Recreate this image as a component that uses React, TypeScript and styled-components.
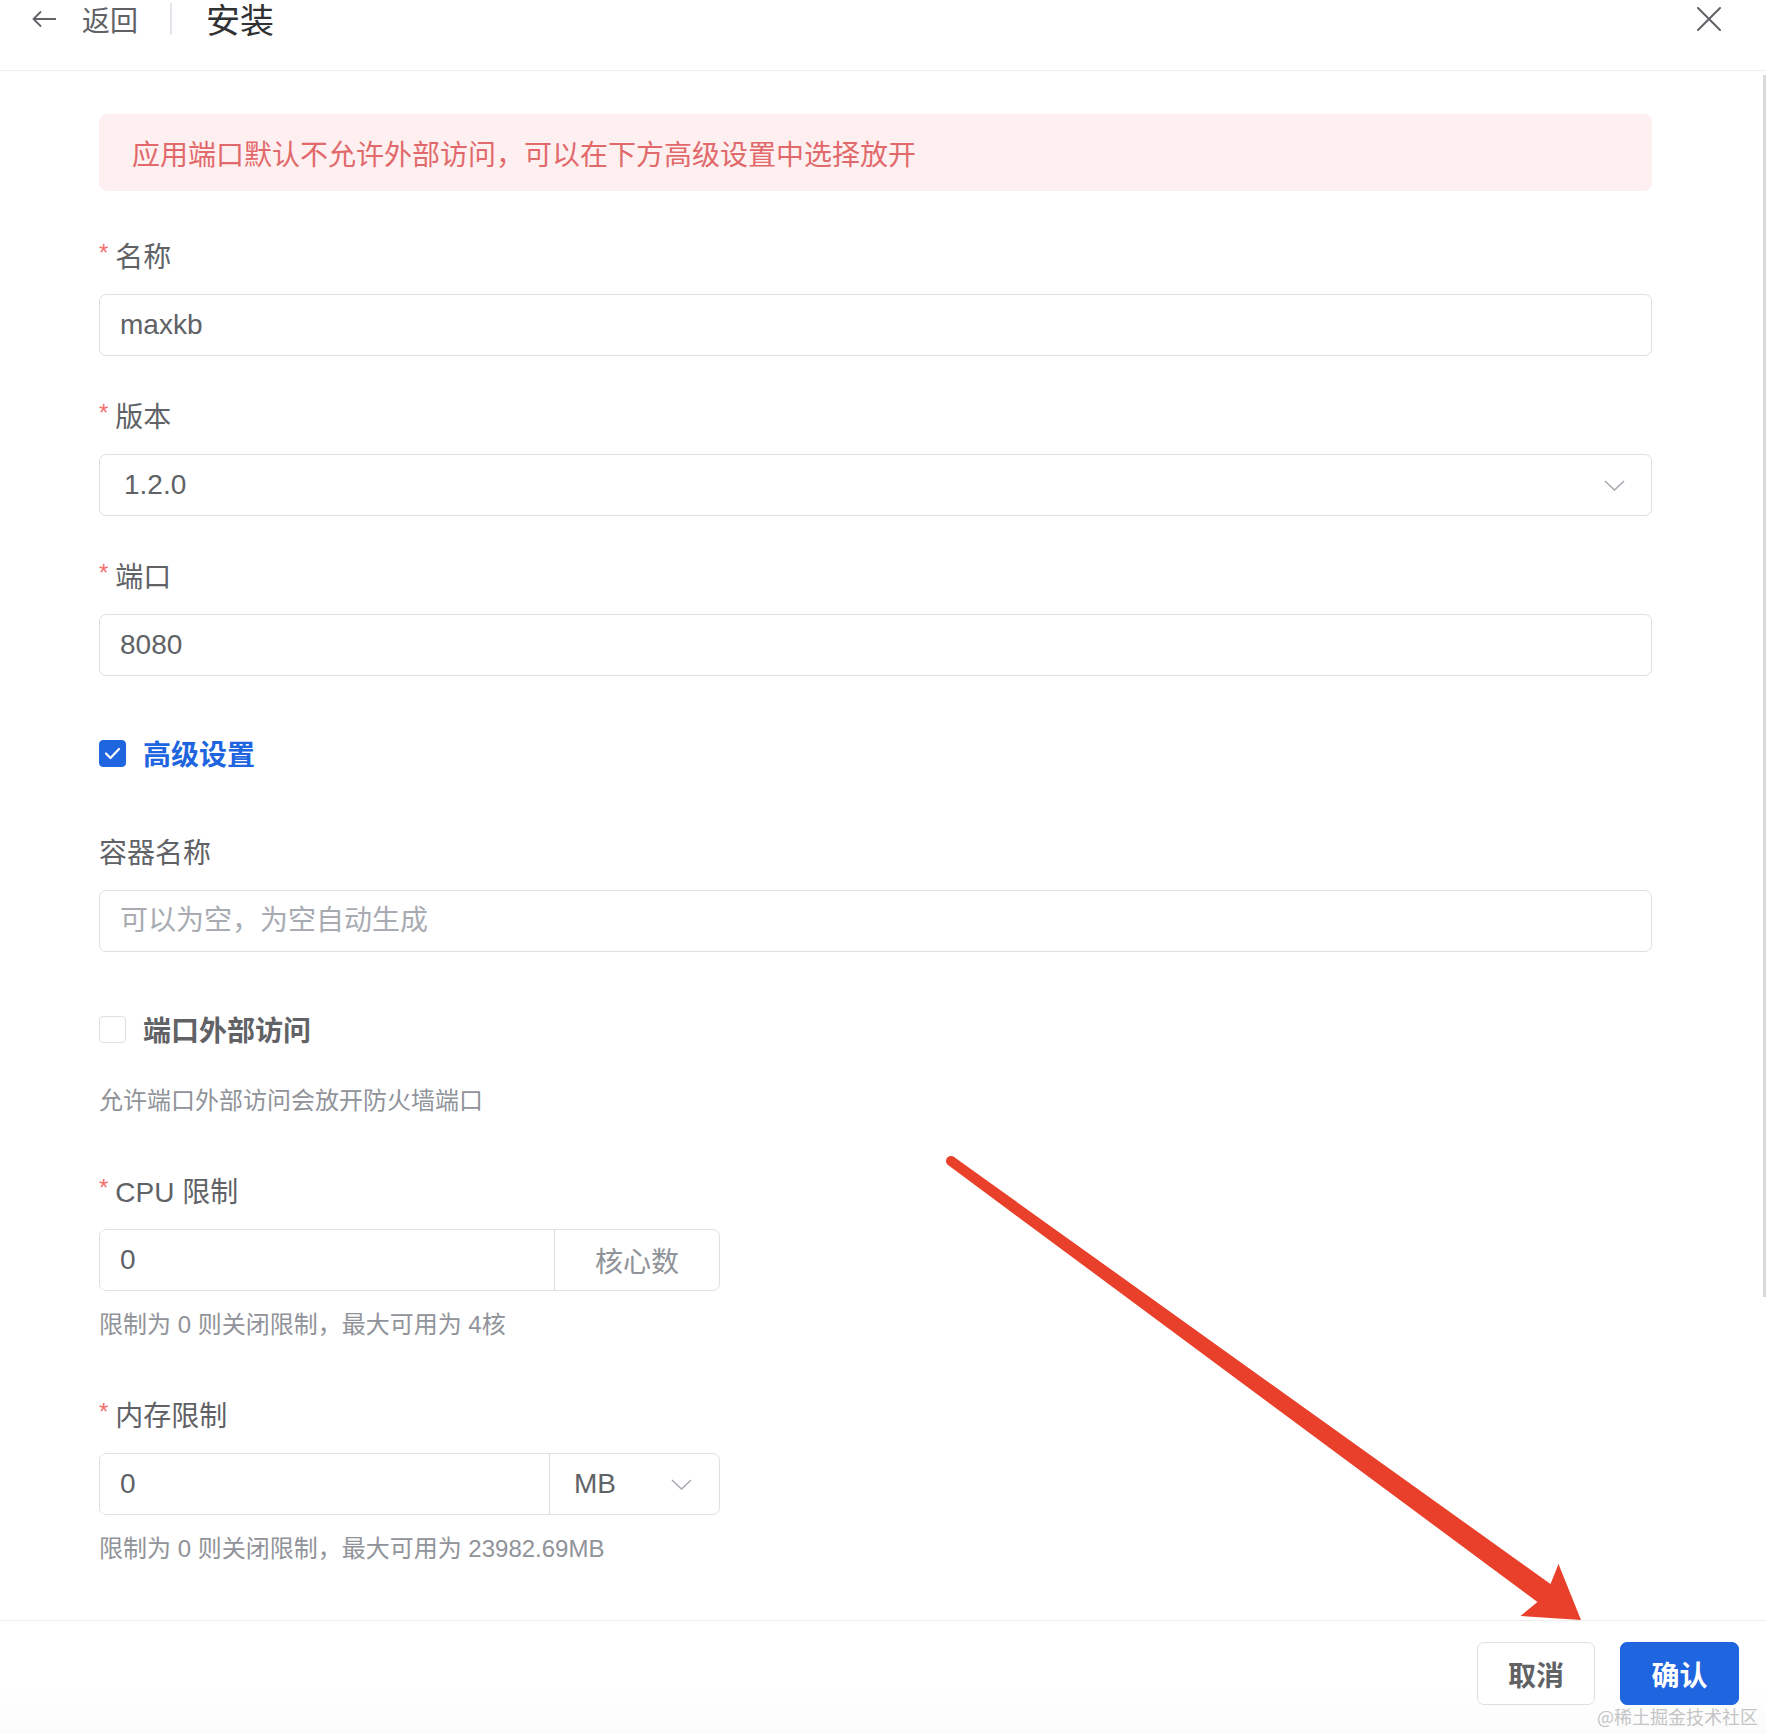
import React from 'react';
import styled, { createGlobalStyle } from 'styled-components';

const GlobalStyle = createGlobalStyle`
  html, body {
    margin: 0;
    padding: 0;
    background: #fff;
  }
  body {
    font-family: "Liberation Sans", "Noto Sans CJK SC", sans-serif;
  }
  * {
    box-sizing: border-box;
  }
`;

const blue = '#2065e0';

const Page = styled.div`
  position: relative;
  width: 100%;
  height: 1734px;
  display: flex;
  flex-direction: column;
  overflow: hidden;
  background: #fff;
`;

const Header = styled.header`
  height: 71px;
  flex-shrink: 0;
  display: flex;
  align-items: flex-start;
  justify-content: space-between;
  padding: 0 45px 0 32px;
  border-bottom: 1px solid #efefef;
`;

const HeaderLeft = styled.div`
  height: 37px;
  display: flex;
  align-items: center;
`;

const Back = styled.span`
  display: flex;
  align-items: center;
  gap: 26px;
  color: #606266;
  font-size: 28px;
`;

const HeaderDivider = styled.span`
  width: 2px;
  height: 32px;
  margin: 0 34px 0 32px;
  background: #e4e6eb;
`;

const Title = styled.span`
  color: #303133;
  font-size: 34px;
  font-weight: 400;
`;

const Close = styled.span`
  height: 38px;
  display: flex;
  align-items: center;
`;

const Body = styled.main`
  position: relative;
  flex: 1;
  display: flex;
  flex-direction: column;
  padding: 43px 114px 0 99px;
`;

const ScrollThumb = styled.div`
  position: absolute;
  top: 4px;
  right: 0;
  width: 3px;
  height: 1222px;
  background: #dadada;
`;

const Alert = styled.div`
  height: 77px;
  display: flex;
  align-items: center;
  padding-left: 33px;
  margin-bottom: 44px;
  border-radius: 8px;
  background: #fef0f0;
  color: #e2696b;
  font-size: 28px;
`;

const FormItem = styled.div<{ $mb: number }>`
  display: flex;
  flex-direction: column;
  margin-bottom: ${(p) => p.$mb}px;
`;

const Label = styled.label`
  display: flex;
  align-items: center;
  height: 40px;
  margin-bottom: 19px;
  color: #606266;
  font-size: 28px;
`;

const Star = styled.span`
  color: #f56c6c;
  font-size: 24px;
  margin-right: 7px;
  align-self: flex-start;
  line-height: 36px;
`;

const Input = styled.input`
  height: 62px;
  width: 100%;
  padding: 0 20px;
  border: 1px solid #dcdfe6;
  border-radius: 7px;
  outline: none;
  font: inherit;
  font-size: 28px;
  color: #606266;
  background: #fff;

  &::placeholder {
    color: #a8abb2;
  }
`;

const Select = styled.div`
  height: 62px;
  display: flex;
  align-items: center;
  justify-content: space-between;
  padding: 0 26px 0 24px;
  border: 1px solid #dcdfe6;
  border-radius: 7px;
  color: #606266;
  font-size: 28px;
`;

const CheckRow = styled.div<{ $mb: number }>`
  height: 40px;
  display: flex;
  align-items: center;
  gap: 17px;
  margin-bottom: ${(p) => p.$mb}px;
`;

const Box = styled.span<{ $checked?: boolean }>`
  width: 27px;
  height: 27px;
  display: flex;
  align-items: center;
  justify-content: center;
  border-radius: 4px;
  border: 1.5px solid ${(p) => (p.$checked ? blue : '#dcdfe6')};
  background: ${(p) => (p.$checked ? blue : '#fff')};
`;

const CheckText = styled.span<{ $checked?: boolean }>`
  font-size: 28px;
  font-weight: 700;
  color: ${(p) => (p.$checked ? blue : '#606266')};
`;

const Help = styled.div<{ $mt?: number; $mb?: number }>`
  line-height: 34px;
  font-size: 24px;
  color: #909399;
  margin-top: ${(p) => p.$mt || 0}px;
  margin-bottom: ${(p) => p.$mb || 0}px;
`;

const Group = styled.div`
  width: 621px;
  height: 62px;
  display: flex;
  border: 1px solid #dcdfe6;
  border-radius: 7px;
  overflow: hidden;
`;

const GroupField = styled.input`
  flex: 1;
  min-width: 0;
  border: none;
  outline: none;
  padding: 0 20px;
  font: inherit;
  font-size: 28px;
  color: #606266;
  background: #fff;
`;

const Append = styled.div<{ $w: number }>`
  width: ${(p) => p.$w}px;
  display: flex;
  align-items: center;
  justify-content: center;
  border-left: 1px solid #dcdfe6;
  color: #909399;
  font-size: 28px;
`;

const UnitSelect = styled.div<{ $w: number }>`
  width: ${(p) => p.$w}px;
  display: flex;
  align-items: center;
  justify-content: space-between;
  padding: 0 27px 0 24px;
  border-left: 1px solid #dcdfe6;
  color: #606266;
  font-size: 28px;
`;

const Footer = styled.footer`
  height: 114px;
  flex-shrink: 0;
  display: flex;
  justify-content: flex-end;
  align-items: flex-start;
  gap: 25px;
  padding: 21px 27px 0 0;
  border-top: 1px solid #eeeeee;
  background: linear-gradient(to bottom, #fff 60%, #fbfbfb 100%);
`;

const Button = styled.button<{ $primary?: boolean; $w: number }>`
  width: ${(p) => p.$w}px;
  height: 63px;
  border-radius: 7px;
  border: 1.5px solid ${(p) => (p.$primary ? blue : '#dcdfe6')};
  background: ${(p) => (p.$primary ? blue : '#fff')};
  color: ${(p) => (p.$primary ? '#fff' : '#606266')};
  font-family: "Liberation Sans", "Noto Sans CJK SC", sans-serif;
  font-size: 28px;
  font-weight: 700;
  padding: 0;
`;

const Watermark = styled.div`
  position: absolute;
  right: 8px;
  bottom: 7px;
  font-size: 18px;
  line-height: 22px;
  color: #c4c4c4;
  font-family: "Noto Sans CJK SC", sans-serif;
`;

const Annotation = styled.svg`
  position: absolute;
  top: 0;
  left: 0;
  pointer-events: none;
`;

const Chevron = () => (
  <svg width="21" height="11" viewBox="0 0 21 11">
    <path d="M1 1 L10.5 10 L20 1" fill="none" stroke="#a8abb2" strokeWidth="1.6" />
  </svg>
);

const ArrowBack = () => (
  <svg width="24" height="16" viewBox="0 0 24 16">
    <path
      d="M1.5 8 H23.5 M8.5 1 L1.5 8 L8.5 15"
      fill="none"
      stroke="#606266"
      strokeWidth="1.8"
      strokeLinecap="round"
      strokeLinejoin="round"
    />
  </svg>
);

const CloseIcon = () => (
  <svg width="24" height="24" viewBox="0 0 24 24">
    <path d="M1 1 L23 23 M23 1 L1 23" stroke="#606266" strokeWidth="2" strokeLinecap="round" />
  </svg>
);

const Check = () => (
  <svg width="17" height="13" viewBox="0 0 17 13">
    <path d="M2 6.5 L6.5 11 L15 2" fill="none" stroke="#fff" strokeWidth="2.2" strokeLinecap="round" strokeLinejoin="round" />
  </svg>
);

export default function App() {
  return (
    <Page>
      <GlobalStyle />
      <Header>
        <HeaderLeft>
          <Back>
            <ArrowBack />
            返回
          </Back>
          <HeaderDivider />
          <Title>安装</Title>
        </HeaderLeft>
        <Close>
          <CloseIcon />
        </Close>
      </Header>

      <Body>
        <ScrollThumb />
        <Alert>应用端口默认不允许外部访问，可以在下方高级设置中选择放开</Alert>

        <FormItem $mb={39}>
          <Label>
            <Star>*</Star>名称
          </Label>
          <Input defaultValue="maxkb" />
        </FormItem>

        <FormItem $mb={39}>
          <Label>
            <Star>*</Star>版本
          </Label>
          <Select>
            <span>1.2.0</span>
            <Chevron />
          </Select>
        </FormItem>

        <FormItem $mb={57}>
          <Label>
            <Star>*</Star>端口
          </Label>
          <Input defaultValue="8080" />
        </FormItem>

        <CheckRow $mb={58}>
          <Box $checked>
            <Check />
          </Box>
          <CheckText $checked>高级设置</CheckText>
        </CheckRow>

        <FormItem $mb={57}>
          <Label>容器名称</Label>
          <Input placeholder="可以为空，为空自动生成" />
        </FormItem>

        <CheckRow $mb={35}>
          <Box />
          <CheckText>端口外部访问</CheckText>
        </CheckRow>
        <Help $mb={52}>允许端口外部访问会放开防火墙端口</Help>

        <FormItem $mb={52}>
          <Label>
            <Star>*</Star>CPU 限制
          </Label>
          <Group>
            <GroupField defaultValue="0" />
            <Append $w={165}>核心数</Append>
          </Group>
          <Help $mt={17}>限制为 0 则关闭限制，最大可用为 4核</Help>
        </FormItem>

        <FormItem $mb={0}>
          <Label>
            <Star>*</Star>内存限制
          </Label>
          <Group>
            <GroupField defaultValue="0" />
            <UnitSelect $w={170}>
              <span>MB</span>
              <Chevron />
            </UnitSelect>
          </Group>
          <Help $mt={17}>限制为 0 则关闭限制，最大可用为 23982.69MB</Help>
        </FormItem>
      </Body>

      <Footer>
        <Button $w={118}>取消</Button>
        <Button $w={119} $primary>
          确认
        </Button>
      </Footer>

      <Annotation width="1766" height="1734" viewBox="0 0 1766 1734">
        <circle cx="951" cy="1161" r="5" fill="#e8402a" />
        <polygon
          points="954,1157 1550.5,1584 1558.5,1564 1581,1620 1520.5,1616 1537.5,1602 948,1165"
          fill="#e8402a"
        />
      </Annotation>
      <Watermark>@稀土掘金技术社区</Watermark>
    </Page>
  );
}
